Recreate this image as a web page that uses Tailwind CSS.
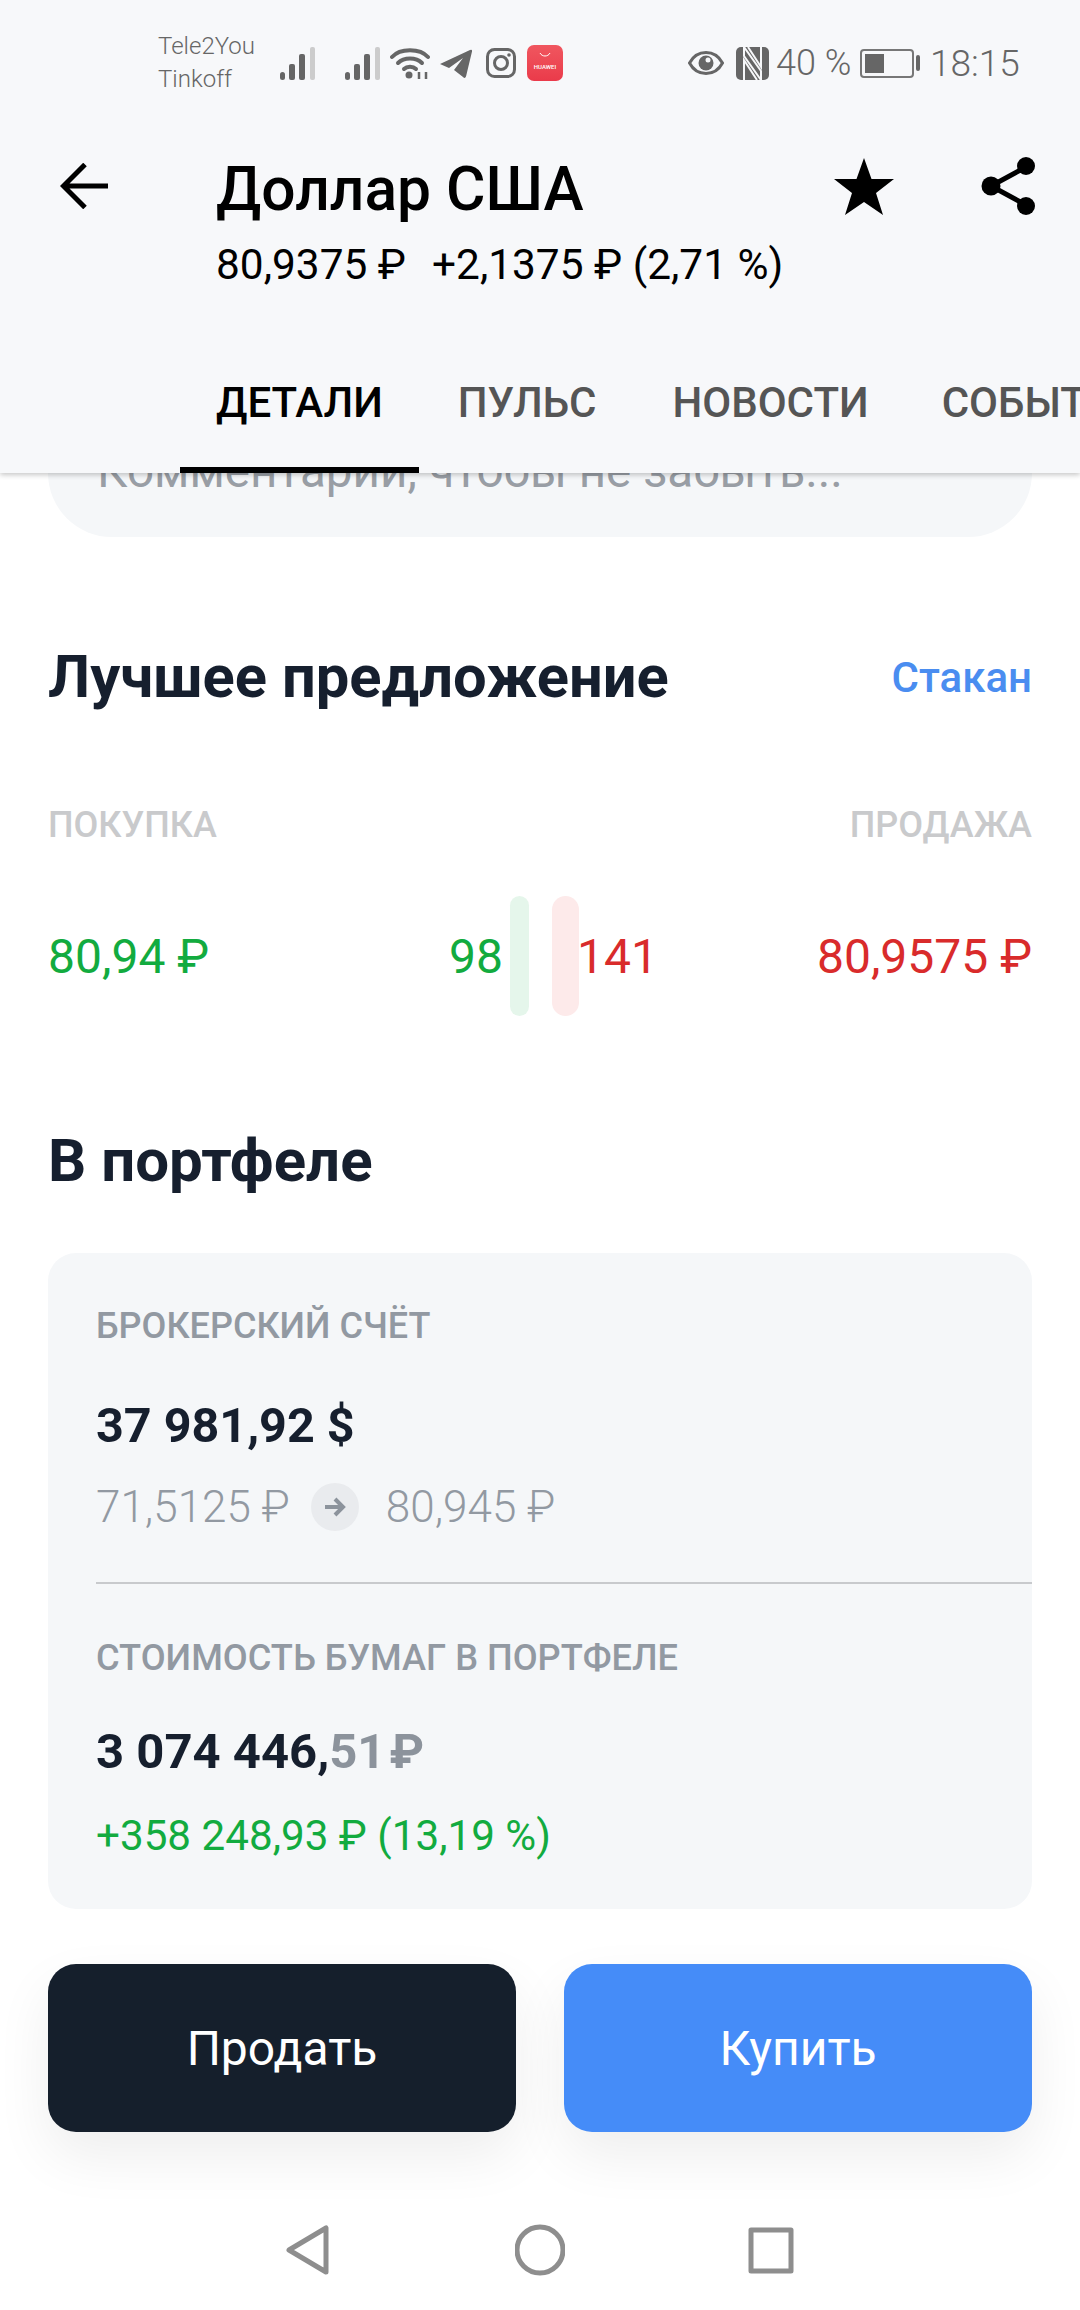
<!DOCTYPE html>
<html lang="ru">
<head>
  <meta charset="UTF-8" />
  <meta name="viewport" content="width=device-width, initial-scale=1.0" />
  <title>Доллар США</title>
  <script src="https://cdn.jsdelivr.net/npm/@tailwindcss/browser@4"></script>
</head>
<body class="bg-white">
  <div class="relative w-[1080px] h-[2310px] overflow-hidden bg-white font-['Roboto',sans-serif] text-[#161f2e]">

    <!-- Шапка -->
    <header class="relative z-10 h-[473px] bg-[#f7f8fa] shadow-[0_2px_5px_rgba(0,0,0,0.22)]">
      <!-- Статус-бар -->
      <div class="flex h-[126px] items-center pl-[158px] text-[#666666]">
        <div class="w-[122px] text-[24px] leading-[33px] font-light">
          <div>Tele2You</div>
          <div>Tinkoff</div>
        </div>
        <svg class="w-[35px] h-[33px]" viewBox="0 0 35 33"><rect x="0" y="25" width="5" height="8" rx="2.5" fill="#666"/><rect x="9" y="17" width="6" height="16" rx="2" fill="#666"/><rect x="19" y="7" width="6" height="26" rx="2" fill="#666"/><rect x="30" y="0" width="5" height="33" rx="2" fill="#ccc"/></svg>
        <svg class="ml-[30px] w-[35px] h-[33px]" viewBox="0 0 35 33"><rect x="0" y="25" width="5" height="8" rx="2.5" fill="#666"/><rect x="9" y="17" width="6" height="16" rx="2" fill="#666"/><rect x="19" y="7" width="6" height="26" rx="2" fill="#666"/><rect x="30" y="0" width="5" height="33" rx="2" fill="#ccc"/></svg>
        <svg class="ml-[10px] w-[40px] h-[32px]" viewBox="0 0 40 32" fill="none" stroke="#666" stroke-width="4" stroke-linecap="round"><path d="M2 10C10 1 30 1 38 10"/><path d="M8 16C14 10 26 10 32 16"/><path d="M14 22C17 19 23 19 26 22"/><circle cx="19" cy="28" r="3.5" fill="#666" stroke="none"/><path d="M29 25v7M36 25v7" stroke-width="2.5" stroke-linecap="butt"/></svg>
        <svg class="ml-[9px] w-[33px] h-[29px]" viewBox="0 0 33 29"><path d="M1 15L31 1Q33.500 0 33 2.500L27 27.500Q26 30 24 28L15 21L24 9L10 19Z" fill="#666"/></svg>
        <svg class="ml-[14px] w-[30px] h-[30px]" viewBox="0 0 30 30" fill="none" stroke="#666" stroke-width="3"><rect x="1.500" y="1.500" width="27" height="27" rx="7"/><circle cx="15" cy="15" r="6.500"/><circle cx="23" cy="7" r="1.800" fill="#666" stroke="none"/></svg>
        <div class="ml-[11px] flex h-[36px] w-[36px] flex-col items-center rounded-[7px] bg-gradient-to-b from-[#f0565f] to-[#ea3a4a]">
          <svg class="mt-[7px] w-[12px] h-[6px]" viewBox="0 0 12 6" fill="none" stroke="#fff" stroke-width="1"><path d="M1 1C3 5 9 5 11 1"/></svg>
          <span class="mt-[5px] text-[6px] leading-[8px] font-medium text-white">HUAWEI</span>
        </div>
        <svg class="ml-[125px] w-[36px] h-[26px]" viewBox="0 0 36 26" fill="none" stroke="#666" stroke-width="3"><path d="M1.500 13C9 -1 27 -1 34.500 13C27 27 9 27 1.500 13Z"/><circle cx="18" cy="13" r="7.500" fill="#666" stroke="none"/><circle cx="20" cy="10" r="2.500" fill="#f7f8fa" stroke="none"/></svg>
        <svg class="ml-[12px] w-[33px] h-[33px]" viewBox="0 0 33 33"><rect width="33" height="33" rx="5" fill="#666"/><path d="M8 -1V9L25 33M8 33V13L21 33M25 34V24L8 0M25 0V20L12 0" fill="none" stroke="#f7f8fa" stroke-width="2"/></svg>
        <span class="ml-[7px] w-[84px] text-[36px] leading-none font-light whitespace-nowrap">40 %</span>
        <div class="flex items-center">
          <div class="flex h-[29px] w-[54px] items-center rounded-[4px] border-2 border-[#777777] pl-[3px]"><div class="h-[19px] w-[19px] bg-[#666666]"></div></div>
          <div class="ml-[2px] h-[16px] w-[4px] rounded-full bg-[#666666]"></div>
        </div>
        <span class="ml-[10px] text-[37px] leading-none font-light">18:15</span>
      </div>

      <!-- Заголовок -->
      <div class="mt-[26px] flex text-black">
        <svg class="ml-[60px] mt-[11px] w-[48px] h-[46px]" viewBox="0 0 48 46" fill="none" stroke="#000" stroke-width="5"><path d="M48 23H4M25 1.500L3.500 23L25 44.500"/></svg>
        <div class="ml-[109px] w-[600px]">
          <h1 class="text-[60.5px] leading-[76px] font-medium -ml-[1px]">Доллар США</h1>
          <div class="-ml-[1px] flex text-[42.4px] leading-[74px]"><span class="w-[216px]">80,9375 ₽</span><span>+2,1375 ₽ (2,71 %)</span></div>
        </div>
        <svg class="ml-[17px] mt-[6px] w-[60px] h-[57px]" viewBox="0 0 60 57"><path d="M30 0L37.500 21H60L42 35L49 57L30 44L11 57L18 35L0 21H22.500Z" fill="#000"/></svg>
        <svg class="ml-[87px] mt-[4px] w-[55px] h-[60px]" viewBox="0 0 55 60" fill="none" stroke="#000" stroke-width="5"><path d="M45 11L10 30L45 49"/><circle cx="45" cy="10" r="9" fill="#000" stroke="none"/><circle cx="10" cy="30" r="9.500" fill="#000" stroke="none"/><circle cx="45" cy="50" r="9" fill="#000" stroke="none"/></svg>
      </div>

      <!-- Вкладки -->
      <nav class="mt-[29px] flex overflow-hidden pl-[180px] text-[42px] font-medium text-[#555555]">
        <div class="flex h-[142px] shrink-0 items-center border-b-[6px] border-black px-[36px] pt-[6px] text-black">ДЕТАЛИ</div>
        <div class="flex h-[142px] shrink-0 items-center px-[39px]">ПУЛЬС</div>
        <div class="flex h-[142px] shrink-0 items-center px-[37px]">НОВОСТИ</div>
        <div class="flex h-[142px] shrink-0 items-center pl-[36px] whitespace-nowrap">СОБЫТИЯ</div>
      </nav>
    </header>

    <main>
      <!-- Комментарий уходит под шапку -->
      <div class="mx-[48px] -mt-[86px] h-[150px] rounded-b-[64px] bg-[#f5f7f9] pl-[49px] pt-[54px] text-[47.6px] leading-[60px] text-[#999ea5]">Комментарии, чтобы не забыть...</div>

      <!-- Лучшее предложение -->
      <section class="px-[48px]">
        <div class="mt-[101px] flex h-[80px] items-center justify-between">
          <h2 class="text-[59.7px] font-bold">Лучшее предложение</h2>
          <span class="-mt-[2px] text-[42px] font-medium text-[#4a8df0]">Стакан</span>
        </div>
        <div class="mt-[85px] flex justify-between text-[36px] leading-[44px] font-medium text-[#c9cacc]">
          <span>ПОКУПКА</span>
          <span>ПРОДАЖА</span>
        </div>
        <div class="mt-[49px] flex h-[120px] items-center text-[48px]">
          <div class="flex w-[455px] justify-between pt-[2px] text-[#12ab3f]"><span>80,94 ₽</span><span>98</span></div>
          <div class="ml-[7px] h-[120px] w-[19px] rounded-full bg-[#e5f6eb]"></div>
          <div class="ml-[23px] h-[120px] w-[27px] rounded-full bg-[#fdeaea]"></div>
          <div class="-ml-[2px] flex flex-1 justify-between pt-[2px] text-[#d92b2b]"><span>141</span><span>80,9575 ₽</span></div>
        </div>

        <!-- В портфеле -->
        <h2 class="mt-[105px] text-[60px] leading-[80px] font-bold">В портфеле</h2>
        <div class="mt-[52px] h-[656px] rounded-[28px] bg-[#f5f7f9] pl-[48px] pt-[51px]">
          <div class="text-[36px] leading-[44px] font-medium text-[#9299a2]">БРОКЕРСКИЙ СЧЁТ</div>
          <div class="mt-[48px] text-[48.5px] leading-[60px] font-bold">37 981,92 $</div>
          <div class="mt-[27px] flex h-[48px] items-center text-[44px] text-[#9299a2]">
            <span class="font-light">71,5125 ₽</span>
            <div class="ml-[21px] flex h-[48px] w-[48px] items-center justify-center rounded-full bg-[#e9ebee]">
              <svg class="w-[22px] h-[20px]" viewBox="0 0 22 20" fill="none" stroke="#8c939c" stroke-width="4"><path d="M1 10H19M11 2L19 10L11 18"/></svg>
            </div>
            <span class="ml-[27px] font-light">80,945 ₽</span>
          </div>
          <div class="mt-[51px] h-[2px] bg-[#c8cacd]"></div>
          <div class="mt-[52px] text-[36.2px] leading-[44px] font-medium text-[#9299a2]">СТОИМОСТЬ БУМАГ В ПОРТФЕЛЕ</div>
          <div class="mt-[42px] flex text-[49px] leading-[60px] font-bold"><span>3 074 446,</span><span class="text-[#8c939c]">51</span><span class="ml-[4px] text-[#8c939c]">₽</span></div>
          <div class="mt-[26px] text-[42.2px] leading-[56px] text-[#12ab3f]">+358 248,93 ₽ (13,19 %)</div>
        </div>

        <!-- Кнопки -->
        <div class="mt-[55px] flex gap-[48px] text-[48px] text-white">
          <button class="flex h-[168px] flex-1 items-center justify-center rounded-[28px] bg-[#151f2c] pt-[2px] shadow-[0_24px_56px_rgba(0,0,0,0.07)]">Продать</button>
          <button class="flex h-[168px] flex-1 items-center justify-center rounded-[28px] bg-[#458cf8] pt-[2px] shadow-[0_24px_56px_rgba(0,0,0,0.07)]">Купить</button>
        </div>
      </section>
    </main>

    <!-- Навигация Android -->
    <div class="mt-[88px] flex justify-center gap-[181px]">
      <svg class="w-[50px] h-[60px]" viewBox="0 0 50 60" fill="none" stroke="#8e8e8e" stroke-width="5" stroke-linejoin="round"><path d="M42 8V52L5 30Z"/></svg>
      <svg class="w-[50px] h-[60px]" viewBox="0 0 50 60" fill="none" stroke="#8e8e8e" stroke-width="5"><circle cx="25" cy="30" r="23"/></svg>
      <svg class="w-[50px] h-[60px]" viewBox="0 0 50 60" fill="none" stroke="#8e8e8e" stroke-width="5" stroke-linejoin="round"><rect x="5" y="10" width="40" height="41"/></svg>
    </div>
  </div>
</body>
</html>
